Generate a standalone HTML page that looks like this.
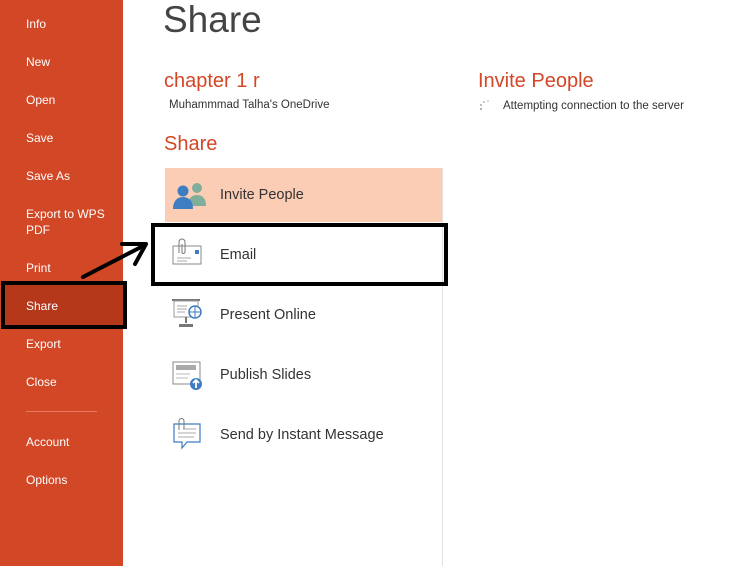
<!DOCTYPE html>
<html><head><meta charset="utf-8"><style>
*{margin:0;padding:0;box-sizing:border-box}
body{width:735px;height:566px;overflow:hidden;background:#fff;font-family:"Liberation Sans",sans-serif;position:relative}
#side{position:absolute;left:0;top:0;width:123px;height:566px;background:#d24726}
.si{position:absolute;left:26px;color:#fff;font-size:12px;line-height:16px}
#shl{position:absolute;left:4px;top:284px;width:120px;height:42px;background:#b5381b}
#sbox{position:absolute;left:1px;top:281px;width:126px;height:48px;border:4px solid #000}
.t{position:absolute;white-space:nowrap}
.red{color:#d24726;font-size:20px}
.row{position:absolute;left:165px;width:277px;height:54px}
.row span{position:absolute;left:55px;top:19px;font-size:14.5px;color:#333}
.row svg{position:absolute;left:6px;top:10px}
</style></head><body>
<div id="side">
<div id="shl"></div>
<div class="si" style="top:16px">Info</div>
<div class="si" style="top:54px">New</div>
<div class="si" style="top:92px">Open</div>
<div class="si" style="top:130px">Save</div>
<div class="si" style="top:168px">Save As</div>
<div class="si" style="top:206px">Export to WPS<br>PDF</div>
<div class="si" style="top:260px">Print</div>
<div class="si" style="top:298px">Share</div>
<div class="si" style="top:336px">Export</div>
<div class="si" style="top:374px">Close</div>
<div style="position:absolute;left:26px;top:411px;width:71px;height:1px;background:#e57a5f"></div>
<div class="si" style="top:434px">Account</div>
<div class="si" style="top:472px">Options</div>
</div>
<div id="sbox"></div>

<div class="t" style="left:163px;top:-1px;font-size:37px;color:#444;font-weight:300">Share</div>
<div class="t red" style="left:164px;top:70px">chapter 1 r</div>
<div class="t" style="left:169px;top:99px;font-size:11.5px;color:#333">Muhammmad Talha's OneDrive</div>
<div class="t red" style="left:164px;top:133px">Share</div>
<div class="t red" style="left:478px;top:70px">Invite People</div>
<svg class="t" style="left:478px;top:99px" width="14" height="14"><circle cx="3" cy="10" r="1" fill="#999"/><circle cx="3" cy="6" r="1" fill="#aaa"/><circle cx="6" cy="3" r="1" fill="#bbb"/><circle cx="10" cy="2" r="1" fill="#ccc"/></svg>
<div class="t" style="left:503px;top:100px;font-size:11.5px;color:#333">Attempting connection to the server</div>

<div style="position:absolute;left:442px;top:168px;width:1px;height:398px;background:#e1e1e1"></div>

<div class="row" style="top:168px;background:#fccdb5">
<svg width="36" height="34"><circle cx="26" cy="10" r="5" fill="#7fae9a"/><path d="M17 28c0-8 4-11 9-11s9 3 9 11z" fill="#7fae9a"/><circle cx="12" cy="13" r="5.5" fill="#3e7dc1"/><path d="M2 31c0-8 4-12 10-12s10 4 10 12z" fill="#3e7dc1"/></svg>
<span>Invite People</span></div>

<div class="row" style="top:228px">
<svg width="36" height="34"><rect x="2" y="8" width="28" height="18" fill="#fff" stroke="#888"/><rect x="24" y="12" width="4" height="4" fill="#3e7dc1"/><path d="M6 20h14M6 23h10" stroke="#aaa"/><path d="M8 15V4a3 3 0 0 1 6 0v10a1.5 1.5 0 0 1-3 0V6" fill="none" stroke="#777"/></svg>
<span>Email</span></div>

<div class="row" style="top:288px">
<svg width="36" height="34"><rect x="1" y="1" width="28" height="2" fill="#777"/><rect x="3" y="3" width="24" height="16" fill="#fff" stroke="#999"/><path d="M6 8h10M6 11h10M6 14h8" stroke="#aaa"/><path d="M15 19v6" stroke="#777" stroke-width="2"/><path d="M8 29h14v-3H8z" fill="#777"/><circle cx="24" cy="14" r="6" fill="#fff" stroke="#3e7dc1" stroke-width="1.5"/><path d="M18 14h12M24 8v12" stroke="#3e7dc1"/></svg>
<span>Present Online</span></div>

<div class="row" style="top:348px">
<svg width="36" height="34"><rect x="2" y="4" width="27" height="22" fill="#fff" stroke="#888"/><rect x="5" y="7" width="20" height="5" fill="#aaa"/><path d="M5 16h14M5 20h12" stroke="#bbb"/><circle cx="25" cy="26" r="6" fill="#3e7dc1"/><path d="M25 30v-7M22 25l3-3 3 3" stroke="#fff" stroke-width="1.8" fill="none"/></svg>
<span>Publish Slides</span></div>

<div class="row" style="top:408px">
<svg width="36" height="36"><path d="M3 6h26v18H16l-5 6v-6H3z" fill="#fff" stroke="#3e7dc1" stroke-width="1.2"/><path d="M12 11h13M7 15h18M7 19h16" stroke="#aaa"/><path d="M8 12V3a2.5 2.5 0 0 1 5 0v8" fill="none" stroke="#777"/></svg>
<span>Send by Instant Message</span></div>

<div style="position:absolute;left:151px;top:223px;width:297px;height:63px;border:4px solid #000"></div>
<svg style="position:absolute;left:0;top:0" width="200" height="300"><path d="M83 277L145 245M122 244l24 0l-11 20" fill="none" stroke="#000" stroke-width="4" stroke-linecap="round" stroke-linejoin="round"/></svg>
</body></html>
